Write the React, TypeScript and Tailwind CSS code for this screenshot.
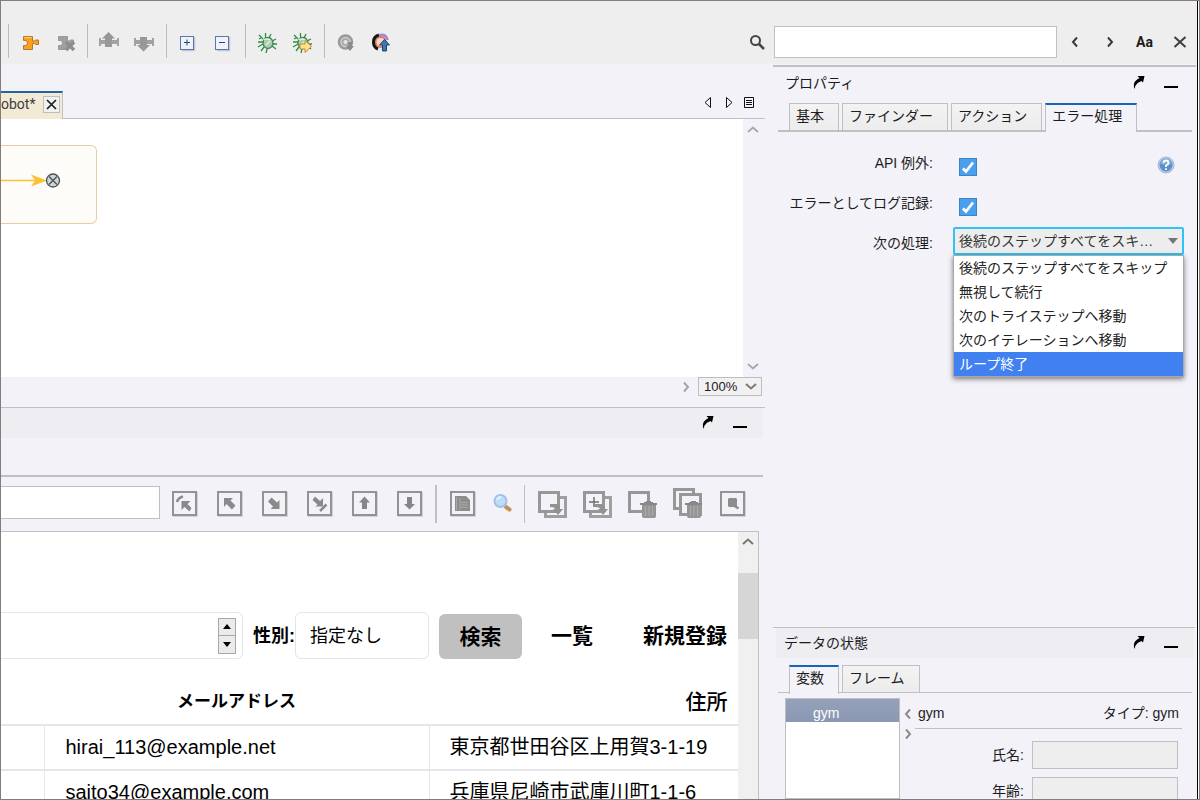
import type { ReactNode } from "react";

const rows = [
  { email: "hirai_113@example.net", address: "東京都世田谷区上用賀3-1-19" },
  { email: "saito34@example.com", address: "兵庫県尼崎市武庫川町1-1-6" },
];

const nextActions = [
  "後続のステップすべてをスキップ",
  "無視して続行",
  "次のトライステップへ移動",
  "次のイテレーションへ移動",
  "ループ終了",
];

/* ---------- main toolbar icons ---------- */

function Tool({ label, children }: { label: string; children: ReactNode }) {
  return (
    <button type="button" aria-label={label} className="flex h-[35px] w-[35px] items-center justify-center">
      <svg width="25" height="25" viewBox="0 0 25 25" fill="none">
        {children}
      </svg>
    </button>
  );
}

function ToolGroup({ children }: { children: ReactNode }) {
  return (
    <div className="flex w-[79px] items-start">
      <div className="mr-1 h-[34px] w-px bg-[#bcbcbc]" />
      <div className="flex pt-0.5">{children}</div>
    </div>
  );
}

function Puzzle({ fill, stroke }: { fill: string; stroke: string }) {
  return (
    <path
      d="M5.500 5.500H14.500V10H16.500L17.500 9H20.500V13.500H17.500L16.500 12.500H14.500V18.500H5.500V14.500H7.500Q9.500 14.500 9.500 12T7.500 9.500H5.500Z"
      fill={fill}
      stroke={stroke}
    />
  );
}

function Bug() {
  return (
    <>
      <path
        d="M8 8 4 4M10.500 7V2M14 7l2-4M8 11H3M8 13l-5 3M17 10l4-2M18 13h4M17 15l4 3M12 18l-1 4M9 16l-3 4M6 7l-2 1"
        stroke="#2f8f3e"
        strokeWidth="1.300"
      />
      <ellipse cx="13" cy="12" rx="5" ry="5.500" fill="#a9cfae" stroke="#3f8063" strokeWidth="1.300" />
      <path d="M9 9q3-2 6 0M11 14l4-4" stroke="#e3f3e0" strokeWidth="1.300" />
    </>
  );
}

/* ---------- browser toolbar icons ---------- */

function BoxTool({ label, children }: { label: string; children?: ReactNode }) {
  return (
    <button type="button" aria-label={label} className="flex h-[45px] w-[45px] items-center justify-center">
      <svg width="27" height="27" viewBox="0 0 27 27" fill="none">
        <path d="M2 26.500H26.500V2" stroke="#d3d3d6" />
        <rect x="2" y="2" width="23" height="23" stroke="#939393" strokeWidth="2" />
        {children}
      </svg>
    </button>
  );
}

function StackTool({ label, children }: { label: string; children: ReactNode }) {
  return (
    <button type="button" aria-label={label} className="flex h-[45px] w-[45px] items-center justify-center">
      <svg width="33" height="33" viewBox="0 0 33 33" fill="none">
        {children}
      </svg>
    </button>
  );
}

function FrontAndBack() {
  return (
    <>
      <path d="M23 10.500H29.500V29.500H9.500V25" stroke="#9f9f9f" strokeWidth="3" />
      <rect x="3.500" y="5.500" width="19" height="19" stroke="#979797" strokeWidth="3" />
      <path d="M14 17h7q3 0 3 5h3l-5 6-5-6h2q0-2-5-2z" fill="#929292" />
    </>
  );
}

function Trash() {
  return (
    <>
      <path d="M16 16h14v13q0 2-2 2H18q-2 0-2-2z" fill="#959595" />
      <path d="M14 17h17" stroke="#888888" strokeWidth="2" />
      <path d="M18 15.500h9M20 14.500h5" stroke="#888888" />
      <path d="M19.500 19v10M23 19v10M26.500 19v10" stroke="#adadad" />
    </>
  );
}

/* ---------- shared bits ---------- */

function Chevron({ dir, className }: { dir: "up" | "down" | "left" | "right"; className: string }) {
  const d = {
    up: "M2 9 7 4.500 12 9",
    down: "M2 5 7 9.500 12 5",
    left: "M9 2.500 5 7 9 11.500",
    right: "M5 2.500 9 7 5 11.500",
  }[dir];
  return (
    <svg width="14" height="14" viewBox="0 0 14 14" fill="none" className={className}>
      <path d={d} stroke="currentColor" strokeWidth="2" />
    </svg>
  );
}

function PanelButtons() {
  return (
    <div className="flex items-center gap-4 pb-0.5">
      <button type="button" aria-label="切り離す">
        <svg width="16" height="16" viewBox="0 0 16 16">
          <path d="M6.500 2H13.500L12 8.500 10.500 7Q6.500 8 4.500 11.500L3.500 15Q2 10 4 7.500T8.500 4Z" fill="#000" />
        </svg>
      </button>
      <button type="button" aria-label="最小化" className="flex h-4 w-4 items-end justify-center pb-0.5">
        <span className="h-0.5 w-3.5 bg-black" />
      </button>
    </div>
  );
}

function Tab({ active, children }: { active?: boolean; children: ReactNode }) {
  return (
    <button
      type="button"
      role="tab"
      aria-selected={!!active}
      className={
        active
          ? "z-10 -mb-0.5 h-[29px] border-x border-t-2 border-x-[#c0c0c0] border-t-[#1a64b8] bg-[#f3f2f8] pr-3.5 pb-[5px] pl-1.5 leading-5"
          : "h-[27px] border-x border-t border-[#c0c0c0] bg-gradient-to-b from-[#f3f3f3] to-[#ececec] pr-3.5 pb-0.5 pl-1.5 leading-5"
      }
    >
      {children}
    </button>
  );
}

function CheckRow({ id, label, help }: { id: string; label: string; help?: boolean }) {
  return (
    <div className="flex h-10">
      <label htmlFor={id} className="h-8 w-40 text-right leading-8">
        {label}
      </label>
      <div className="ml-[26px] flex flex-1 items-center pr-[22px]">
        <span className="relative h-[18px] w-[18px]">
          <input
            id={id}
            type="checkbox"
            defaultChecked
            className="block h-[18px] w-[18px] appearance-none border border-[#3c84c6] bg-[#4ba0ee]"
          />
          <svg viewBox="0 0 18 18" className="pointer-events-none absolute inset-0" fill="none">
            <path d="M4 10.500 7 13.500 14 4.500" stroke="#fff" strokeWidth="2.800" />
          </svg>
        </span>
        {help && (
          <button type="button" aria-label="ヘルプ" className="mb-1 ml-auto">
            <svg width="18" height="18" viewBox="0 0 18 18" fill="none">
              <circle cx="9" cy="9" r="8" fill="#b9cfe9" stroke="#a3b9d6" />
              <circle cx="9" cy="9" r="6.500" fill="#5c8fc7" />
              <path d="M3 8Q5 3 9 3t6 5Q9 10 3 8z" fill="#7fabd9" />
              <path d="M6.500 7Q6.500 4.500 9 4.500T11.500 7Q11.500 8.500 9 9.500V11M9 12.200V14" stroke="#fff" strokeWidth="1.800" />
            </svg>
          </button>
        )}
      </div>
    </div>
  );
}

/* ---------- sections ---------- */

function Toolbar() {
  return (
    <header className="flex h-[63px] items-start bg-[#eeeeee] pt-[23px] pl-[7px]">
      <ToolGroup>
        <Tool label="挿入">
          <Puzzle fill="#fb9f1c" stroke="#b8782c" />
          <path d="M6.500 6.500h7" stroke="#ffd27a" />
        </Tool>
        <Tool label="削除">
          <Puzzle fill="#a0a0a0" stroke="#989898" />
          <path d="M13 11l8 8M21 11l-8 8" stroke="#8e8e8e" strokeWidth="3.500" />
        </Tool>
      </ToolGroup>
      <ToolGroup>
        <Tool label="上へ">
          <path d="M11.500 1 18 7.500H15V16H8V7.500H5Z" fill="#989898" />
          <path d="M2 7h2v2h4v4H4v2H2zM22 7h-2v2h-5v4h5v2h2z" fill="#a2a2a2" />
        </Tool>
        <Tool label="下へ">
          <path d="M11.500 20.500 18 14H15V6H8V14H5Z" fill="#989898" />
          <path d="M2 7h2v2h4v4H4v2H2zM22 7h-2v2h-5v4h5v2h2z" fill="#a2a2a2" />
        </Tool>
      </ToolGroup>
      <ToolGroup>
        <Tool label="展開">
          <path d="M6 19.500H18.500V6" stroke="#c3c5cc" strokeWidth="1.500" />
          <rect x="4.500" y="5.500" width="13" height="13" fill="#eef2fd" stroke="#5b76a8" />
          <path d="M8 11.500h6M11 8.500v6" stroke="#2f4263" />
        </Tool>
        <Tool label="折りたたむ">
          <path d="M6 19.500H18.500V6" stroke="#c3c5cc" strokeWidth="1.500" />
          <rect x="4.500" y="5.500" width="13" height="13" fill="#eef2fd" stroke="#5b76a8" />
          <path d="M8 11.500h6" stroke="#2f4263" />
        </Tool>
      </ToolGroup>
      <ToolGroup>
        <Tool label="デバッグ">
          <Bug />
        </Tool>
        <Tool label="デバッグ実行">
          <Bug />
          <path d="M10 13h5v-3.500l6.500 6-6.500 6V18h-5z" fill="#ffe28a" stroke="#c08a2c" />
        </Tool>
      </ToolGroup>
      <ToolGroup>
        <Tool label="ダウンロード">
          <circle cx="11.500" cy="11" r="6.500" fill="#d4d4d4" stroke="#999999" strokeWidth="2.500" />
          <circle cx="11.500" cy="11" r="3" fill="#e6e6e6" stroke="#ababab" strokeWidth="2" />
          <path d="M14 11h4v4h2l-4 5-4-5h2z" fill="#8a8a8a" />
        </Tool>
        <Tool label="アップロード">
          <circle cx="11.500" cy="11" r="5" fill="#f5d9c4" stroke="#e77a62" strokeWidth="2" />
          <path d="M10 4Q4.500 5.500 4.500 11T9 18" stroke="#151515" strokeWidth="3" />
          <path d="M10 4.500Q17 2.500 18.500 9" stroke="#a48cc8" strokeWidth="3" />
          <path d="M15.500 8.500 20.500 14H17.500V20H13.500V14H10.500Z" fill="#3c78b4" stroke="#1c4470" />
        </Tool>
      </ToolGroup>

      <form className="ml-auto flex h-9 items-center" onSubmit={(e) => e.preventDefault()}>
        <label htmlFor="find" aria-label="検索" className="mr-[9px] block">
          <svg width="16" height="16" viewBox="0 0 16 16" fill="none">
            <circle cx="6.500" cy="6.500" r="4.500" stroke="#454545" strokeWidth="2" />
            <path d="M10 10l5 5" stroke="#454545" strokeWidth="2.500" />
          </svg>
        </label>
        <input id="find" className="h-8 w-[283px] border border-[#c0c0c0] bg-white px-2" />
        <button type="button" aria-label="前へ" className="flex w-[35px] justify-center">
          <Chevron dir="left" className="text-[#3a3a3a]" />
        </button>
        <button type="button" aria-label="次へ" className="flex w-[35px] justify-center">
          <Chevron dir="right" className="text-[#3a3a3a]" />
        </button>
        <button type="button" className="w-[35px] text-center font-['Roboto'] text-[14px] font-bold">
          Aa
        </button>
        <button type="button" aria-label="閉じる" className="flex w-[35px] justify-center">
          <svg width="14" height="14" viewBox="0 0 14 14">
            <path d="M1.500 2 12.500 12M12.500 2 1.500 12" stroke="#3f3f44" strokeWidth="2" />
          </svg>
        </button>
      </form>
    </header>
  );
}

function RobotView() {
  return (
    <section>
      <div className="mr-2 flex h-[55px] items-end">
        <div className="flex h-[28px] w-[62px] items-center justify-between border-t-2 border-r border-t-[#1f669f] border-r-[#c0c0c0] bg-[#f3ead5] pr-[2px] pb-1">
          <span className="font-['Roboto'] text-[14px] text-[#3c3c3c]">obot*</span>
          <button
            type="button"
            aria-label="タブを閉じる"
            className="flex h-[17px] w-[17px] items-center justify-center border border-[#bdbdc2] bg-[#f1f1f1]"
          >
            <svg width="11" height="11" viewBox="0 0 11 11">
              <path d="M1 1 10 10M10 1 1 10" stroke="#1a1f1a" strokeWidth="1.700" />
            </svg>
          </button>
        </div>
        <div className="flex h-full flex-1 items-end justify-end gap-2 border-b border-[#c0c0c0] pr-2.5 pb-2">
          <button type="button" aria-label="前のタブ">
            <svg width="12" height="14" viewBox="0 0 12 14" fill="none">
              <path d="M7.500 1.500V11.500L2 6.500Z" stroke="#111" />
            </svg>
          </button>
          <button type="button" aria-label="次のタブ">
            <svg width="12" height="14" viewBox="0 0 12 14" fill="none">
              <path d="M3.500 1.500V11.500L9 6.500Z" stroke="#111" />
            </svg>
          </button>
          <button type="button" aria-label="タブ一覧">
            <svg width="12" height="14" viewBox="0 0 12 14" fill="none">
              <path d="M1.500 1.500H10.500V11.500H1.500ZM3 4.500H9M3 6.500H9M3 8.500H9" stroke="#111" />
            </svg>
          </button>
        </div>
      </div>

      <div className="flex h-[258px]">
        <div className="flex-1 bg-white pt-[26px]">
          <div className="flex h-[79px] w-24 items-center rounded-r-md border border-l-0 border-[#e3cf9f] bg-[#fdfcf9] pb-2">
            <svg width="60" height="16" viewBox="0 0 60 16" fill="none">
              <path d="M0 7.500H36" stroke="#fdc134" strokeWidth="1.500" />
              <path d="M30 1.500 46 7.500 30 13.500 34 7.500Z" fill="#fdc134" />
              <circle cx="52" cy="7.500" r="6.500" fill="#ccd5d8" stroke="#4c5155" strokeWidth="1.300" />
              <path d="M48 3.500l8 8M56 3.500l-8 8" stroke="#4c5155" strokeWidth="1.300" />
            </svg>
          </div>
        </div>
        <div className="mr-2.5 flex w-5 flex-col items-center justify-between pt-1 pb-1">
          <Chevron dir="up" className="text-[#aaaaaa]" />
          <Chevron dir="down" className="text-[#aaaaaa]" />
        </div>
      </div>

      <div className="flex h-[30px] items-start justify-end pr-[11px]">
        <Chevron dir="right" className="mt-[3px] mr-[5px] text-[#a5a5a5]" />
        <span className="relative">
          <select
            aria-label="ズーム"
            className="block h-[19px] w-16 appearance-none border border-[#bdbdbd] bg-[#f1f1f1] pl-[5px] text-[13px] leading-4"
          >
            <option>100%</option>
          </select>
          <Chevron dir="down" className="pointer-events-none absolute top-0.5 right-1 text-[#7a7a7a]" />
        </span>
      </div>
    </section>
  );
}

function BrowserToolbar() {
  return (
    <div className="flex h-[54px] items-start">
      <input aria-label="アドレス" className="mt-[9px] h-[33px] w-[159px] border border-l-0 border-[#c0c0c0] bg-white px-2" />
      <div className="mt-1 ml-0.5 flex items-center">
        <BoxTool label="先頭へ">
          <path d="M10.500 11h9l-3 3 4 4-2 3.500-5-4.500-3 3z" fill="#8a8a8a" />
          <path d="M6 12Q7 8 12 6.500" stroke="#8a8a8a" strokeWidth="2.500" />
        </BoxTool>
        <BoxTool label="親へ">
          <path d="M8 8h9l-2.500 2.500 5 5-3.500 4-5.500-5.500L8 17z" fill="#8a8a8a" />
        </BoxTool>
        <BoxTool label="子へ">
          <path d="M18.500 19h-9l2.500-2.500-5-5L10.500 7.500l5.500 5L18.500 10z" fill="#8a8a8a" />
        </BoxTool>
        <BoxTool label="末尾へ">
          <path d="M17 16.500H9.500l2-2L6.500 10 9 6.500l5 4.500 3-3z" fill="#8a8a8a" />
          <path d="M20.500 14.500 14 21" stroke="#8a8a8a" strokeWidth="2.500" />
        </BoxTool>
        <BoxTool label="上へ">
          <path d="M13.500 6.500 19 12.500H16V19H11V12.500H8Z" fill="#868686" />
        </BoxTool>
        <BoxTool label="下へ">
          <path d="M13.500 19.500 19 14H16V7H11V14H8Z" fill="#868686" />
        </BoxTool>
        <div className="mr-[3px] ml-[3px] h-[38px] w-0.5 bg-[#c0c0c0]" />
        <BoxTool label="ソース">
          <path d="M6 6h11l4 4v11H6z" fill="#8d8d8d" />
          <path d="M7.500 7v13M11 8v12M12 12.500h7M12 15h7M12 17.500h7" stroke="#a9a9a9" />
        </BoxTool>
        <button type="button" aria-label="拡大" className="flex w-[35px] justify-center">
          <svg width="21" height="21" viewBox="0 0 21 21" fill="none">
            <path d="M14 14l3.500 2.500" stroke="#c6905c" strokeWidth="4" strokeLinecap="round" />
            <circle cx="8.500" cy="8" r="6" fill="#bcdcf8" stroke="#a2c0e8" strokeWidth="2" />
            <path d="M5 7q1-3 4-3" stroke="#e5f4ff" strokeWidth="2" />
          </svg>
        </button>
        <div className="mr-[5px] ml-1 h-[38px] w-px bg-[#c0c0c0]" />
        <StackTool label="複製">
          <FrontAndBack />
        </StackTool>
        <StackTool label="追加">
          <FrontAndBack />
          <path d="M8 15h10M13 10v10" stroke="#6f6f6f" strokeWidth="1.500" />
        </StackTool>
        <StackTool label="閉じる">
          <rect x="3.500" y="5.500" width="19" height="19" stroke="#979797" strokeWidth="3" />
          <Trash />
        </StackTool>
        <StackTool label="すべて閉じる">
          <path d="M8 21.500H3.500V2.500H22.500V7" stroke="#979797" strokeWidth="3" />
          <rect x="9.500" y="7.500" width="20" height="20" stroke="#979797" strokeWidth="3" />
          <Trash />
        </StackTool>
        <BoxTool label="プレビュー">
          <path d="M10 8h7l1 1v7l-1 1h-7l-1-1V9z" fill="#8d8d8d" />
          <path d="M15 15.500l4.500 3" stroke="#8d8d8d" strokeWidth="2.500" />
        </BoxTool>
      </div>
    </div>
  );
}

function WebPage() {
  return (
    <div className="mr-[14px] flex min-h-0 flex-1 border-t border-r border-[#c0c0c0] bg-white">
      <div className="min-w-0 flex-1 overflow-hidden pt-20 text-[20px] text-black">
        <div className="flex h-[47px] items-center">
          <div className="flex h-full w-[242px] items-center justify-end rounded-r-md border border-l-0 border-[#e4e4ea] pr-1.5">
            <input aria-label="年齢" className="h-full min-w-0 flex-1 px-3" />
            <div className="flex h-[36px] w-[18px] flex-col border border-[#a8a8a8] bg-[#ebebeb]">
              <button type="button" aria-label="増やす" className="flex flex-1 items-center justify-center border-b border-[#a8a8a8]">
                <svg width="8" height="6" viewBox="0 0 8 6">
                  <path d="M0 5 4 0 8 5z" />
                </svg>
              </button>
              <button type="button" aria-label="減らす" className="flex flex-1 items-center justify-center">
                <svg width="8" height="6" viewBox="0 0 8 6">
                  <path d="M0 1 4 6 8 1z" />
                </svg>
              </button>
            </div>
          </div>
          <label htmlFor="gender" className="w-[52px] pl-2.5 text-[18px] font-bold whitespace-nowrap">
            性別:
          </label>
          <select
            id="gender"
            className="h-full w-[134px] appearance-none rounded-md border border-[#e4e4ea] bg-white pl-3.5 text-[18px]"
          >
            <option>指定なし</option>
          </select>
          <button type="button" className="mt-0.5 ml-2.5 h-[45px] w-[83px] rounded-md bg-[#c0c0c0] text-[21px] font-bold">
            検索
          </button>
          <a href="#list" className="ml-[29px] text-[21px] font-bold">
            一覧
          </a>
          <a href="#new" className="ml-[50px] text-[21px] font-bold whitespace-nowrap">
            新規登録
          </a>
        </div>
        <table className="mt-5 w-[983px] table-fixed border-collapse">
          <colgroup>
            <col className="w-[43px]" />
            <col className="w-[385px]" />
            <col className="w-[555px]" />
          </colgroup>
          <thead>
            <tr className="h-[46px]">
              <th />
              <th className="text-[17px]">メールアドレス</th>
              <th className="text-[21px] font-medium">住所</th>
            </tr>
          </thead>
          <tbody>
            {rows.map((r) => (
              <tr key={r.email} className="h-[45px] border-t-2 border-[#e5e5ea]">
                <td />
                <td className="border-l border-[#e5e5ea] pb-0.5 pl-[21px] leading-6">{r.email}</td>
                <td className="border-l border-[#e5e5ea] pb-0.5 pl-5 leading-6">{r.address}</td>
              </tr>
            ))}
          </tbody>
        </table>
      </div>
      <div className="flex w-5 flex-col items-center bg-[#f0f0f0]">
        <Chevron dir="up" className="mt-[3px] text-[#777777]" />
        <div className="mt-6 h-[66px] w-full bg-[#d6d6d6]" />
      </div>
    </div>
  );
}

function Properties() {
  return (
    <section className="flex-1">
      <div className="mt-px mr-px border-t-2 border-[#c0c0c0]" />
      <div className="flex h-8 items-center justify-between pr-[18px] pb-px pl-3">
        <h2>プロパティ</h2>
        <PanelButtons />
      </div>
      <div role="tablist" className="mt-1 mr-[5px] ml-[5px] flex h-[29px] items-end gap-[3px] border-b-2 border-[#c0c0c0] pl-[11px]">
        <Tab>基本</Tab>
        <Tab>ファインダー</Tab>
        <Tab>アクション</Tab>
        <Tab active>エラー処理</Tab>
      </div>
      <div className="pt-[15px]">
        <CheckRow id="api-exception" label="API 例外:" help />
        <CheckRow id="log-error" label="エラーとしてログ記録:" />
        <div className="flex">
          <label htmlFor="next-action" className="h-8 w-40 text-right leading-8">
            次の処理:
          </label>
          <div className="relative mr-[13px] ml-5 h-7 flex-1">
            <select
              id="next-action"
              className="block h-7 w-full appearance-none overflow-hidden rounded-[2px] border-2 border-[#2fc3f3] bg-[#ededed] pr-6 pl-1 text-ellipsis text-[#333333]"
            >
              <option>{nextActions[0]}</option>
            </select>
            <svg width="10" height="6" viewBox="0 0 10 6" className="pointer-events-none absolute top-[11px] right-1.5">
              <path d="M0 0H10L5 6z" fill="#777" />
            </svg>
            <ul
              role="listbox"
              aria-label="次の処理"
              className="absolute inset-x-0 top-7 z-20 border border-[#a9a9ad] bg-white leading-6 text-[#222222] shadow-[0_2px_5px_rgba(0,0,0,0.5)]"
            >
              {nextActions.map((a, i) => (
                <li
                  key={a}
                  role="option"
                  aria-selected={i === 4}
                  className={i === 4 ? "h-6 bg-[#4080f0] pl-[5px] text-white" : "h-6 pl-[5px]"}
                >
                  {a}
                </li>
              ))}
            </ul>
          </div>
        </div>
      </div>
    </section>
  );
}

function Field({ id, label }: { id: string; label: string }) {
  return (
    <div className="flex items-center justify-end gap-2">
      <label htmlFor={id}>{label}</label>
      <input id={id} className="h-7 w-[146px] border border-[#c0c0c0] bg-[#eeeeee] px-2" />
    </div>
  );
}

function DataState() {
  return (
    <section className="flex h-[172px] flex-col overflow-hidden">
      <div className="mr-0.5 border-t border-[#c0c0c0]" />
      <div className="mr-[3px] ml-[3px] flex h-[30px] items-center justify-between bg-[#eeedf2] pr-[15px] pl-2">
        <h2>データの状態</h2>
        <PanelButtons />
      </div>
      <div role="tablist" className="mt-[6px] mr-[5px] ml-[5px] flex h-[29px] flex-none items-end gap-[3px] border-b border-[#c0c0c0] pl-[11px]">
        <Tab active>変数</Tab>
        <Tab>フレーム</Tab>
      </div>
      <div className="mt-[5px] ml-3 flex min-h-0 flex-1">
        <ul className="w-[115px] border border-[#bdbdc2] bg-white">
          <li className="h-[23px] bg-gradient-to-b from-[#94a1ba] to-[#8b98b2] pl-[27px] leading-7 text-white">gym</li>
        </ul>
        <div className="flex w-[15px] flex-col items-center gap-1.5 pt-[9px]">
          <button type="button" aria-label="左へ">
            <Chevron dir="left" className="text-[#8b8b8b]" />
          </button>
          <button type="button" aria-label="右へ">
            <Chevron dir="right" className="text-[#8b8b8b]" />
          </button>
        </div>
        <div className="mr-[15px] flex-1">
          <div className="flex h-[31px] items-center justify-between border-b border-[#c0c0c0] pr-[3px] pl-[3px]">
            <span>gym</span>
            <span>タイプ: gym</span>
          </div>
          <div className="mt-3 mr-1 flex flex-col gap-2">
            <Field id="name" label="氏名:" />
            <Field id="age" label="年齢:" />
          </div>
        </div>
      </div>
    </section>
  );
}

export default function App() {
  return (
    <div className="flex h-screen overflow-hidden border border-[#857b7b] bg-white pr-px font-['Liberation_Sans','Noto_Sans_CJK_JP',sans-serif] text-[14px] leading-5 text-[#1c1c1c]">
      <div className="flex min-w-0 flex-1 flex-col border-r border-black bg-[#f3f2f8]">
        <Toolbar />
        <main className="flex min-h-0 flex-1">
          <div className="flex min-w-0 flex-1 flex-col">
            <RobotView />
            <div className="mr-2 border-t border-[#c0c0c0]" />
            <div className="mr-2.5 flex h-[30px] items-center justify-end bg-[#eeedf2] pr-[15px]">
              <PanelButtons />
            </div>
            <div className="mt-[37px] mr-2.5 border-t-2 border-[#c0c0c0]" />
            <BrowserToolbar />
            <WebPage />
          </div>
          <div className="flex w-[424px] flex-none flex-col">
            <Properties />
            <DataState />
          </div>
        </main>
      </div>
    </div>
  );
}
